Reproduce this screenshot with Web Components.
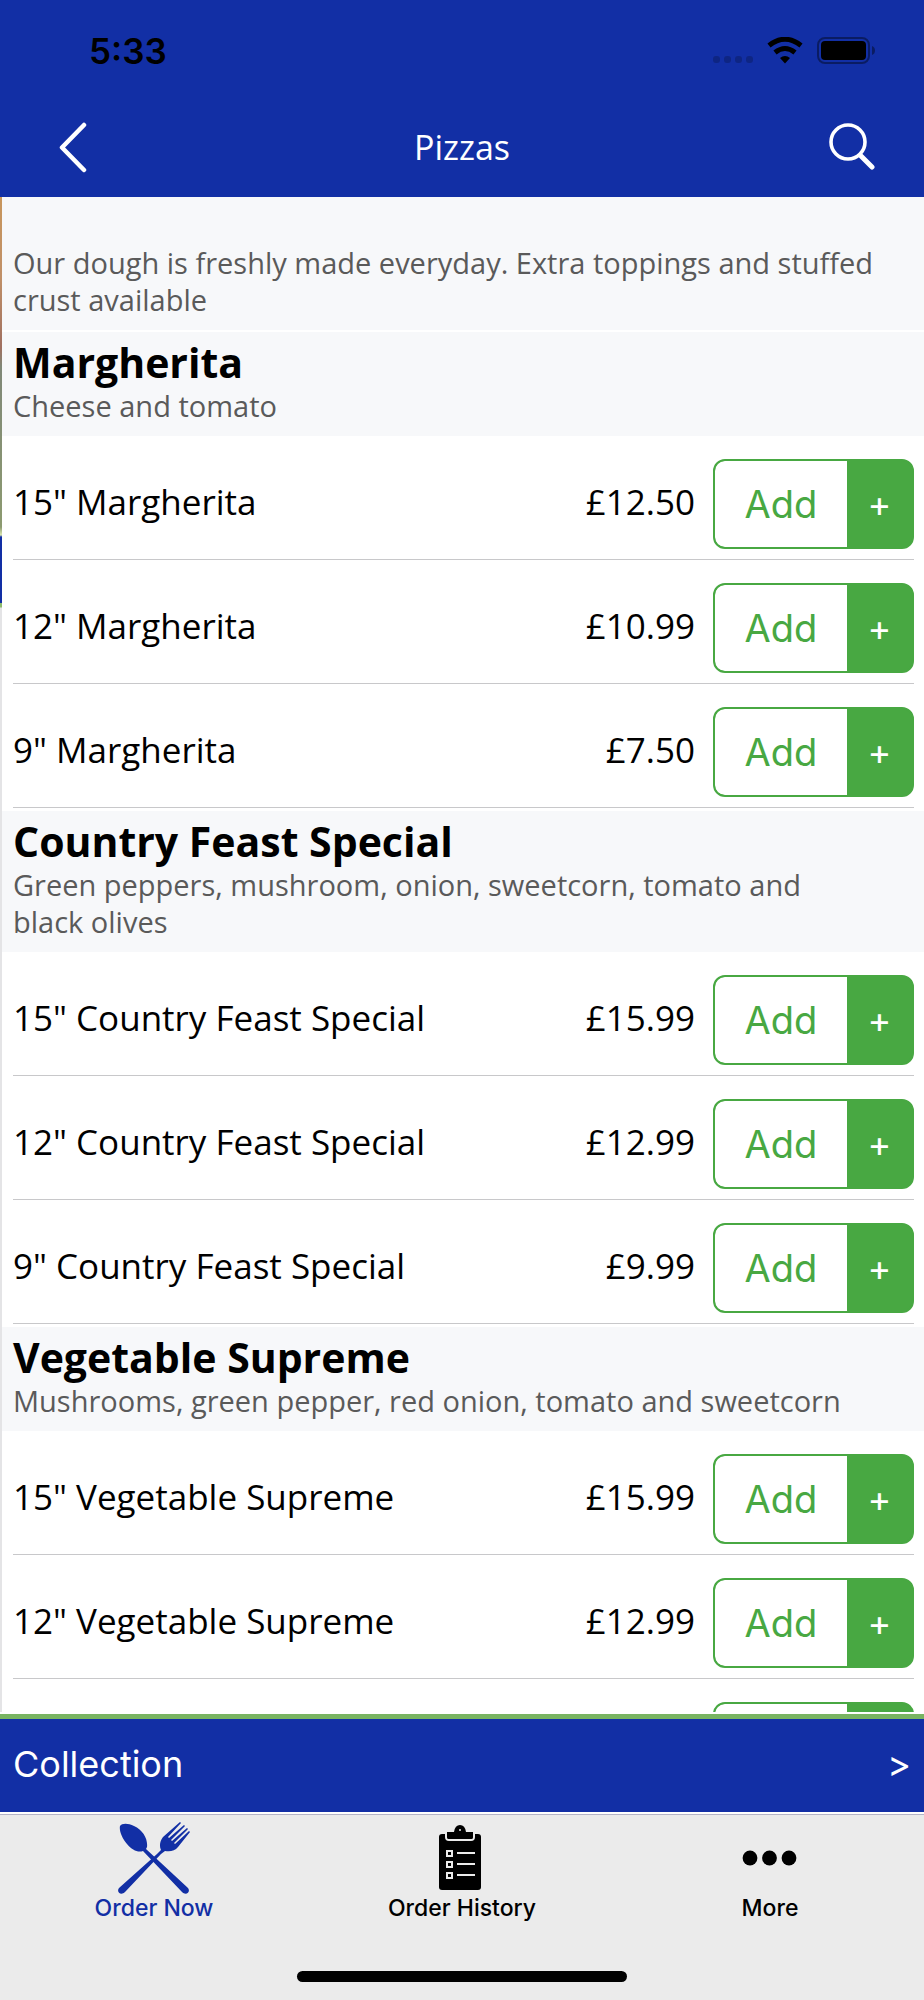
<!DOCTYPE html>
<html lang="en">
<head>
<meta charset="utf-8">
<meta name="viewport" content="width=device-width, initial-scale=1">
<title>Pizzas</title>
<style>
  html, body { margin: 0; height: 100%; }
  body {
    --brand: #122fa5;
    --action: #48a842;
    --panel: #f7f8fa;
    --muted: #5a5a5a;
    --text: "Open Sans", "Noto Sans", sans-serif;
    --system: Inter, Roboto, sans-serif;
    font-family: var(--text);
    color: #000;
    background: #fff;
  }
</style>
</head>
<body>
<app-shell>
  <status-bar slot="top" time="5:33"></status-bar>
  <nav-header slot="top">Pizzas</nav-header>

  <menu-intro>Our dough is freshly made everyday. Extra toppings and stuffed crust available</menu-intro>

  <menu-section heading="Margherita" description="Cheese and tomato">
    <menu-item price="£12.50">15" Margherita</menu-item>
    <menu-item price="£10.99">12" Margherita</menu-item>
    <menu-item price="£7.50">9" Margherita</menu-item>
  </menu-section>
  <menu-section heading="Country Feast Special" description="Green peppers, mushroom, onion, sweetcorn, tomato and black olives">
    <menu-item price="£15.99">15" Country Feast Special</menu-item>
    <menu-item price="£12.99">12" Country Feast Special</menu-item>
    <menu-item price="£9.99">9" Country Feast Special</menu-item>
  </menu-section>
  <menu-section heading="Vegetable Supreme" description="Mushrooms, green pepper, red onion, tomato and sweetcorn">
    <menu-item price="£15.99">15" Vegetable Supreme</menu-item>
    <menu-item price="£12.99">12" Vegetable Supreme</menu-item>
    <menu-item price=""></menu-item>
  </menu-section>

  <order-bar slot="bottom">Collection</order-bar>
  <tab-bar slot="bottom">
    <tab-link active>
      <svg slot="icon" width="72" height="72" viewBox="0 0 72 72" fill="currentColor" aria-hidden="true">
        <path d="M2 4C4 1 10 1 16 4C25 8 30 17 29 25L28 27L70 66C73 70 68 74 64 70L25 29C20 31 14 28 9 22C4 16 1 9 2 4Z"/>
        <path d="M1 66L39 32L43 28C41 24 42 19 45 15L62 0L63 1L50 15L51 16L66 3L67 4L53 18L54 19L69 6L70 7L56 21L57 22L71 9L72 10L60 25C57 29 52 30 47 29L43 32L7 70C3 74 -2 70 1 66Z"/>
      </svg>Order Now</tab-link>
    <tab-link>
      <svg slot="icon" width="48" height="68" viewBox="0 0 48 68" aria-hidden="true">
        <path d="M4 10H40Q43 10 43 13V63Q43 66 40 66H4Q1 66 1 63V13Q1 10 4 10Z" fill="#000"/>
        <path d="M8 10V13Q8 16 11 16H33Q36 16 36 13V10" fill="none" stroke="#ebebeb" stroke-width="2"/>
        <path d="M9 8H16Q17 1 22 1Q27 1 28 8H35V13Q35 15 33 15H11Q9 15 9 13Z" fill="#000"/>
        <circle cx="22" cy="6" r="1" fill="#ebebeb"/>
        <g fill="none" stroke="#ebebeb" stroke-width="2">
          <path d="M9 27H14V32H9ZM9 38H14V43H9ZM9 49H14V54H9ZM19 29H37M19 40H37M19 51H37"/>
        </g>
      </svg>Order History</tab-link>
    <tab-link>
      <svg slot="icon" width="56" height="72" viewBox="0 0 56 72" fill="currentColor" aria-hidden="true">
        <circle cx="8" cy="36" r="7.4"/><circle cx="27.500" cy="36" r="7.4"/><circle cx="47" cy="36" r="7.4"/>
      </svg>More</tab-link>
  </tab-bar>
</app-shell>

<script>
  const define = (name, markup, setup) => {
    const template = document.createElement('template');
    template.innerHTML = markup;
    customElements.define(name, class extends HTMLElement {
      constructor() {
        super();
        this.attachShadow({ mode: 'open' }).append(template.content.cloneNode(true));
      }
      connectedCallback() {
        if (setup) setup(this, this.shadowRoot);
      }
    });
  };

  define('app-shell', `
    <style>
      :host { display: flex; flex-direction: column; height: 100vh; }
      /* The edge of the previous screen shows as a thin strip on the left. */
      main {
        flex: 1; min-height: 0; overflow-y: auto; scrollbar-width: none;
        padding-left: 2px; margin-bottom: 2px;
        background: linear-gradient(#c8965c 0, #c09068 80px, #a07060 150px, #808878 170px, #8c9a70 330px, #dce8b0 338px, var(--brand) 340px, var(--brand) 406px, #8cba6c 406px, #8cba6c 410px, #e4e4e6 411px) left / 2px 100% no-repeat;
      }
    </style>
    <slot name="top"></slot>
    <main><slot></slot></main>
    <slot name="bottom"></slot>
  `);

  define('status-bar', `
    <style>
      :host { display: flex; align-items: center; height: 94px; padding: 4px 48px 0 89px; background: var(--brand); font: 600 35px/44px var(--system); }
      span { flex: 1; }
      svg { display: block; }
    </style>
    <span></span>
    <svg width="164" height="28" viewBox="0 0 164 28" aria-hidden="true">
      <g fill="#000" opacity=".2">
        <rect x="1" y="19" width="7" height="7" rx="3"/><rect x="12" y="19" width="7" height="7" rx="3"/>
        <rect x="23" y="19" width="7" height="7" rx="3"/><rect x="34" y="19" width="7" height="7" rx="3"/>
      </g>
      <path d="M57 8.500Q73 -4 89 8.500" fill="none" stroke="#000" stroke-width="5"/>
      <path d="M63 15.500Q73 7.500 83 15.500" fill="none" stroke="#000" stroke-width="5"/>
      <path d="M68 21Q73 17 78 21L73 26.500Z"/>
      <rect x="106" y="1" width="51" height="25" rx="7" fill="none" stroke="#000" stroke-opacity=".4" stroke-width="2"/>
      <rect x="109" y="4" width="45" height="19" rx="4"/>
      <path d="M160 9Q163 10 163 13.500Q163 17 160 18Z" opacity=".4"/>
    </svg>
  `, (host, root) => { root.querySelector('span').textContent = host.getAttribute('time'); });

  define('nav-header', `
    <style>
      :host { display: grid; grid-template-columns: 1fr auto 1fr; align-items: center; height: 99px; padding: 0 49px; background: var(--brand); color: #fff; }
      h1 { margin: 0; padding-bottom: 2px; font: 400 34px/44px var(--text); }
      button { display: flex; border: 0; padding: 0; background: none; color: inherit; justify-self: start; }
      button:last-child { justify-self: end; }
      svg { fill: none; stroke: currentColor; stroke-linecap: round; stroke-linejoin: round; }
    </style>
    <button aria-label="Back"><svg width="47" height="52" viewBox="0 0 47 52"><path d="M35 3L13 25.500L35 48" stroke-width="4.500"/></svg></button>
    <h1><slot></slot></h1>
    <button aria-label="Search"><svg width="47" height="52" viewBox="0 0 47 52"><circle cx="20" cy="20" r="17" stroke-width="3.600"/><path d="M33 34L44 45" stroke-width="5"/></svg></button>
  `);

  define('menu-intro', `
    <style>
      :host { display: block; padding: 47px 11px 12px; margin-bottom: 2px; background: var(--panel); color: var(--muted); font-size: 29px; line-height: 37px; box-shadow: 0 2px #fff; }
      p { margin: 0; }
    </style>
    <p><slot></slot></p>
  `);

  define('menu-section', `
    <style>
      :host { display: block; padding-bottom: 3px; background: #fff; }
      header { padding: 5px 60px 12px 11px; background: var(--panel); }
      h2 { margin: 0; font-size: 41px; line-height: 50px; font-weight: 700; }
      p { margin: 0; color: var(--muted); font-size: 29px; line-height: 37px; }
    </style>
    <header><h2></h2><p></p></header>
    <slot></slot>
  `, (host, root) => {
    root.querySelector('h2').textContent = host.getAttribute('heading');
    root.querySelector('p').textContent = host.getAttribute('description');
  });

  define('menu-item', `
    <style>
      :host { display: flex; align-items: center; box-sizing: border-box; height: 124px; margin: 0 10px 0 11px; padding: 23px 0 10px; border-bottom: 1px solid #c8c8ca; font-size: 35px; line-height: 44px; }
      .name { flex: 1; padding-bottom: 4px; }
      .price { padding: 0 18px 4px 0; }
    </style>
    <span class="name"><slot></slot></span>
    <span class="price"></span>
    <add-button></add-button>
  `, (host, root) => { root.querySelector('.price').textContent = host.getAttribute('price'); });

  define('add-button', `
    <style>
      :host { display: flex; box-sizing: border-box; width: 201px; height: 90px; border: 2px solid var(--action); border-radius: 12px; overflow: hidden; background: var(--action); }
      button { border: 0; margin: 0; padding: 0; font: 400 38px/44px var(--system); }
      .add { flex: 1; background: #fff; color: var(--action); border-radius: 9px 0 0 9px; }
      .more { width: 65px; background: none; color: #fff; font-size: 36px; }
    </style>
    <button class="add">Add</button>
    <button class="more" aria-label="More options">+</button>
  `);

  define('order-bar', `
    <style>
      :host { display: block; border-top: 5px solid #78b461; background: var(--brand); }
      a { display: flex; justify-content: space-between; align-items: center; height: 89px; padding: 0 13px 4px; color: #fff; text-decoration: none; font: 400 36px/44px var(--system); }
      .go { font-size: 36px; }
    </style>
    <a href="#order"><slot></slot><span class="go">&gt;</span></a>
  `);

  define('tab-bar', `
    <style>
      :host { display: block; border-top: 2px solid #fff; padding-bottom: 18px; background: #ebebeb; box-shadow: inset 0 1px #b4b4c8; }
      nav { display: grid; grid-template-columns: repeat(3, 1fr); height: 157px; }
      .home { width: 330px; max-width: 60%; height: 11px; margin: 0 auto; border-radius: 6px; background: #000; }
    </style>
    <nav><slot></slot></nav>
    <div class="home"></div>
  `);

  define('tab-link', `
    <style>
      :host { display: block; color: #000; }
      :host([active]) { color: var(--brand); }
      a { display: flex; flex-direction: column; align-items: center; color: inherit; text-decoration: none; font: 500 23px/28px var(--system); }
      .icon { display: flex; align-items: center; height: 72px; padding: 8px 0 0; }
    </style>
    <a href="#"><span class="icon"><slot name="icon"></slot></span><span><slot></slot></span></a>
  `);
</script>
</body>
</html>
